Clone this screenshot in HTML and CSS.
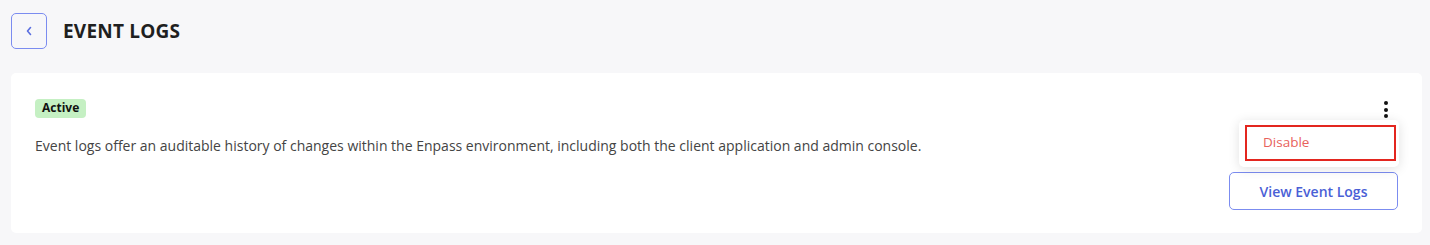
FILE: index.html
```html
<!DOCTYPE html>
<html lang="en">
<head>
    <meta charset="UTF-8">
    <title>Event Logs</title>
    <link rel="stylesheet" href="styles.css">
</head>
<body>
    <div class="page">
        <div class="header">
            <button class="back-btn">
                <svg width="8" height="10" viewBox="0 0 8 10"><path d="M5.5 1.5 L2.5 5 L5.5 8.5" fill="none" stroke="#5a6ee0" stroke-width="1.6" stroke-linecap="round" stroke-linejoin="round"/></svg>
            </button>
            <h1>EVENT LOGS</h1>
        </div>

        <div class="card">
            <div class="card-main">
                <span class="badge">Active</span>
                <p class="desc">Event logs offer an auditable history of changes within the Enpass environment, including both the client application and admin console.</p>
            </div>
            <div class="card-side">
                <div class="kebab">
                    <span></span><span></span><span></span>
                </div>
                <div class="menu">
                    <div class="menu-item">Disable</div>
                </div>
                <button class="btn-outline">View Event Logs</button>
            </div>
        </div>
    </div>
</body>
</html>
```

FILE: styles.css
```css
body {
    margin: 0;
    background-color: #f7f7f9;
    font-family: "Open Sans", Arial, sans-serif;
    color: #222;
}
.page {
    padding: 13px 8px 12px 11px;
}
.header {
    display: flex;
    align-items: center;
    gap: 16px;
    height: 36px;
}
.back-btn {
    width: 36px;
    height: 36px;
    box-sizing: border-box;
    border: 1.5px solid #7b8cf0;
    border-radius: 5px;
    background: transparent;
    display: flex;
    align-items: center;
    justify-content: center;
    padding: 0;
}
.header h1 {
    margin: 0;
    font-size: 19px;
    font-weight: 700;
    color: #1f1f1f;
    letter-spacing: 0.2px;
}
.card {
    margin-top: 24px;
    background: white;
    border-radius: 5px;
    height: 160px;
    display: flex;
    justify-content: space-between;
    box-sizing: border-box;
    padding: 22px 24px 0 24px;
}
.badge {
    display: inline-block;
    background-color: #c5f0c3;
    color: #111;
    font-size: 12px;
    font-weight: 700;
    padding: 1px 7px 2px;
    border-radius: 4px;
    line-height: 16px;
}
.desc {
    margin: 18px 0 0;
    font-size: 14px;
    color: #444;
}
.card-side {
    position: relative;
    width: 169px;
    display: flex;
    flex-direction: column;
    align-items: flex-end;
}
.kebab {
    display: flex;
    flex-direction: column;
    gap: 2.5px;
    margin: 6px 10px 0 0;
}
.kebab span {
    width: 4px;
    height: 4px;
    border-radius: 50%;
    background: #111;
}
.menu {
    position: absolute;
    top: 25px;
    right: -1px;
    width: 160px;
    height: 47px;
    box-sizing: border-box;
    background: white;
    border-radius: 5px;
    box-shadow: 0 2px 12px rgba(0,0,0,0.12);
    padding: 5px 3px 6px 6px;
}
.menu-item {
    border: 2.5px solid #e3261f;
    height: 36px;
    box-sizing: border-box;
    padding-left: 16px;
    line-height: 30px;
    font-size: 13.5px;
    color: #e8625c;
}
.btn-outline {
    margin-top: 54px;
    width: 169px;
    height: 38px;
    border: 1.5px solid #7b8cf0;
    border-radius: 5px;
    background: white;
    color: #4a5fd6;
    font-family: inherit;
    font-size: 14px;
    font-weight: 600;
}
```
